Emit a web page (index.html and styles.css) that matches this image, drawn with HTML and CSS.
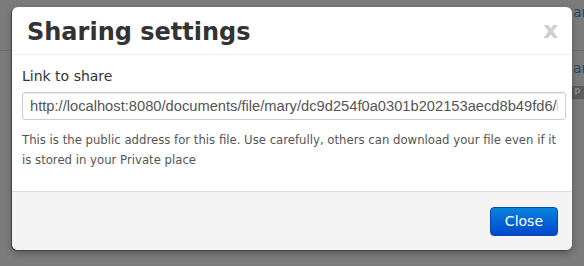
FILE: index.html
```html
<!DOCTYPE html>
<html lang="en">
<head>
  <meta charset="UTF-8">
  <title>Sharing settings</title>
  <link rel="stylesheet" href="styles.css">
</head>
<body>
  <div class="page-behind">
    <div class="behind-rule"></div>
    <span class="behind-link link-top">ar</span>
    <span class="behind-link link-mid">ar</span>
    <span class="behind-badge">P</span>
  </div>

  <div class="modal">
    <div class="modal-header">
      <h3>Sharing settings</h3>
      <button class="modal-close" type="button">x</button>
    </div>

    <div class="modal-body">
      <label class="field-label" for="share-link">Link to share</label>
      <input id="share-link" class="field-input" type="text" readonly
             value="http://localhost:8080/documents/file/mary/dc9d254f0a0301b202153aecd8b49fd6/report.pdf">
      <p class="help-text">This is the public address for this file. Use carefully, others can download your file even if it is stored in your Private place</p>
    </div>

    <div class="modal-footer">
      <button class="btn btn-primary" type="button">Close</button>
    </div>
  </div>
</body>
</html>
```

FILE: styles.css
```css
* {
  margin: 0;
  padding: 0;
  box-sizing: border-box;
}

body {
  font-family: 'DejaVu Sans', Verdana, sans-serif;
  background-color: #7b7b7b;
  min-height: 100vh;
  padding: 7px 0 0 12px;
  overflow: hidden;
  color: #333;
}

/* Page content dimmed behind the backdrop */
.page-behind {
  position: absolute;
  inset: 0;
}

.behind-rule {
  position: absolute;
  left: 0;
  right: 0;
  top: 50px;
  border-top: 1px solid #6c6c6c;
}

.behind-link {
  position: absolute;
  left: 573px;
  font-size: 14px;
  color: #1d4a6e;
}

.link-top { top: 4px; }
.link-mid { top: 60px; }

.behind-badge {
  position: absolute;
  left: 570px;
  top: 86px;
  width: 18px;
  height: 13px;
  border-radius: 3px;
  background-color: #5c5c5c;
  color: #8a8a8a;
  font-size: 9px;
  font-weight: bold;
  line-height: 13px;
  padding-left: 4px;
}

/* Modal */
.modal {
  position: relative;
  width: 560px;
  background-color: #fff;
  border-radius: 6px;
  box-shadow: -1px 1px 0 #444, 0 3px 7px rgba(0, 0, 0, 0.3);
  display: flex;
  flex-direction: column;
}

.modal-header {
  height: 48px;
  padding: 0 14px 0 15px;
  border-bottom: 1px solid #eee;
  display: flex;
  align-items: center;
  justify-content: space-between;
}

.modal-header h3 {
  font-size: 24px;
  font-weight: bold;
  color: #333;
  padding-top: 2px;
}

.modal-close {
  background: transparent;
  border: none;
  font-family: 'DejaVu Sans', sans-serif;
  font-size: 23px;
  font-weight: bold;
  color: #cfcfcf;
  line-height: 1;
  cursor: pointer;
}

.modal-body {
  height: 136px;
  padding: 12px 5px 0 10px;
  display: flex;
  flex-direction: column;
}

.field-label {
  font-size: 14px;
  color: #333;
  line-height: 18px;
}

.field-input {
  margin-top: 7px;
  width: 544px;
  height: 28px;
  padding: 4px 7px;
  border: 1px solid #ccc;
  border-radius: 3px;
  font-family: 'Liberation Sans', Arial, sans-serif;
  font-size: 14.7px;
  color: #555;
  box-shadow: inset 0 1px 1px rgba(0, 0, 0, 0.075);
}

.help-text {
  margin-top: 10px;
  font-size: 11.7px;
  line-height: 20px;
  color: #555;
}

.modal-footer {
  height: 59px;
  padding: 0 14px 0 0;
  background-color: #f4f4f4;
  border-top: 1px solid #ddd;
  border-radius: 0 0 6px 6px;
  display: flex;
  align-items: center;
  justify-content: flex-end;
}

.btn {
  height: 29px;
  padding: 0 14px;
  border-radius: 4px;
  font-family: 'DejaVu Sans', Verdana, sans-serif;
  font-size: 14px;
  cursor: pointer;
}

.btn-primary {
  color: #fff;
  border: 1px solid #0047b8;
  background: linear-gradient(#0a83de, #0048cb);
}
```
